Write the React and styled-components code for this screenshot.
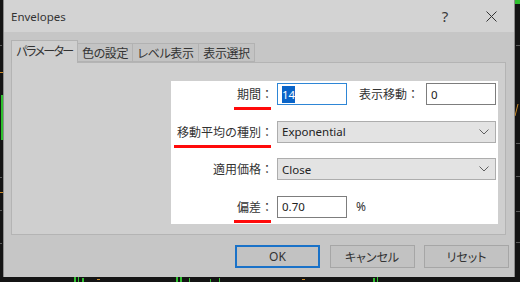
import styled, { createGlobalStyle } from 'styled-components';

const GlobalStyle = createGlobalStyle`
  html, body {
    margin: 0;
    padding: 0;
    background: #141414;
  }
  body {
    font-family: "Noto Sans", "Noto Sans CJK JP", sans-serif;
    color: #2b2b2b;
  }
`;

const Screen = styled.div`
  position: relative;
  width: 520px;
  height: 282px;
  box-sizing: border-box;
  padding: 0 6px 5px 3px;
  display: flex;
  background: #141414;
  overflow: hidden;
`;

const Chart = styled.svg`
  position: absolute;
  inset: 0;
  z-index: 0;
`;

const Dialog = styled.div`
  position: relative;
  z-index: 1;
  flex: 1;
  display: flex;
  flex-direction: column;
  background: #c6c6c6;
  border-left: 1px solid #8c8c8c;
  border-right: 1px solid #8c8c8c;
`;

const TitleBar = styled.div`
  height: 32px;
  display: flex;
  align-items: center;
  padding-left: 7px;
  background: #d3d3d3;
`;

const Title = styled.div`
  flex: 1;
  font-size: 11.5px;
  color: #333;
`;

const CaptionButton = styled.div`
  width: 46px;
  height: 32px;
  display: flex;
  align-items: center;
  justify-content: center;
  font-size: 15px;
  color: #3a3a3a;
`;

const Body = styled.div`
  flex: 1;
  display: flex;
  flex-direction: column;
  padding: 8px 8px 9px 7px;
`;

const TabStrip = styled.div`
  height: 22px;
  display: flex;
  align-items: flex-end;
  position: relative;
  z-index: 2;
`;

const Tab = styled.div`
  box-sizing: border-box;
  width: ${({ $w }) => $w}px;
  height: ${({ $active }) => ($active ? '23px' : '19px')};
  margin-bottom: ${({ $active }) => ($active ? '-1px' : '0')};
  margin-left: ${({ $active }) => ($active ? '0' : '-1px')};
  padding-bottom: ${({ $active }) => ($active ? '2px' : '0')};
  display: flex;
  align-items: center;
  justify-content: center;
  font-size: 12px;
  font-feature-settings: "palt";
  letter-spacing: ${({ $tight }) => ($tight ? '-1.6px' : '-0.4px')};
  color: #333;
  background: ${({ $active }) => ($active ? '#cfcfcf' : '#c3c3c3')};
  border: 1px solid #b2b2b2;
  border-bottom: ${({ $active }) => ($active ? 'none' : '1px solid #b2b2b2')};
`;

const Panel = styled.div`
  height: 173px;
  box-sizing: border-box;
  padding: 18px 7px 10px 159px;
  background: #cfcfcf;
  border: 1px solid #b4b4b4;
  display: flex;
`;

const Form = styled.div`
  flex: 1;
  background: #ffffff;
  padding: 2px 2px 0 0;
  display: flex;
  flex-direction: column;
  gap: 15.5px;
`;

const Row = styled.div`
  height: 22px;
  display: flex;
  align-items: center;
`;

const Label = styled.div`
  width: 102px;
  margin-right: 4px;
  text-align: right;
  font-size: 12px;
  color: #333;
  flex: none;
`;

const LabelText = styled.span`
  position: relative;
  display: inline-block;

  &::after {
    content: '';
    display: ${({ $mark }) => ($mark ? 'block' : 'none')};
    position: absolute;
    left: -3px;
    right: 2px;
    bottom: -7px;
    height: 3px;
    background: #ff0a0a;
  }
`;

const SubLabel = styled.div`
  flex: 1;
  text-align: right;
  padding-right: 7px;
  font-size: 12px;
  color: #333;
`;

const Field = styled.div`
  box-sizing: border-box;
  width: 70px;
  height: 22px;
  display: flex;
  align-items: center;
  padding-left: 4px;
  background: #fff;
  border: 1px solid ${({ $focused }) => ($focused ? '#2e86d6' : '#7d7d7d')};
  font-size: 11.5px;
  color: #222;
`;

const Selected = styled.span`
  background: #0a64c8;
  color: #fff;
  padding: 1px 0;
`;

const Select = styled.div`
  box-sizing: border-box;
  width: 219px;
  height: 22px;
  display: flex;
  align-items: center;
  justify-content: space-between;
  padding: 0 6px 0 4px;
  background: #e3e3e3;
  border: 1px solid #adadad;
  font-size: 11.5px;
  color: #222;
`;

const Unit = styled.span`
  margin-left: 9px;
  font-size: 12px;
  color: #333;
`;

const ButtonRow = styled.div`
  margin-top: 10px;
  margin-right: -3px;
  display: flex;
  justify-content: flex-end;
  gap: 9.5px;
`;

const Button = styled.div`
  box-sizing: border-box;
  width: 85px;
  height: 23px;
  display: flex;
  align-items: center;
  justify-content: center;
  background: #c2c2c2;
  border: ${({ $default }) => ($default ? '2px solid #1a72c8' : '1px solid #a6a6a6')};
  font-size: 12px;
  font-feature-settings: "palt";
  color: #333;
`;

const Chevron = () => (
  <svg width="10" height="6" viewBox="0 0 10 6">
    <polyline points="0.5,0.5 5,5 9.5,0.5" fill="none" stroke="#606060" strokeWidth="1" />
  </svg>
);

const CloseIcon = () => (
  <svg width="11" height="11" viewBox="0 0 11 11">
    <path d="M0.5 0.5 L10.5 10.5 M10.5 0.5 L0.5 10.5" stroke="#333" strokeWidth="1" />
  </svg>
);

const tabs = [
  { name: 'パラメーター', w: 67, tight: true },
  { name: '色の設定', w: 56 },
  { name: 'レベル表示', w: 67 },
  { name: '表示選択', w: 57 },
];

export default function App() {
  return (
    <>
      <GlobalStyle />
      <Screen>
        <Chart width="520" height="282" viewBox="0 0 520 282">
          <g fill="#2fbf2f">
            <rect x="1" y="95" width="2" height="45" />
            <rect x="505" y="0" width="15" height="4" />
            <rect x="74" y="277" width="2" height="5" />
            <rect x="78" y="277" width="1" height="5" />
            <rect x="82" y="278" width="2" height="4" />
            <rect x="176" y="277" width="2" height="5" />
            <rect x="180" y="277" width="2" height="5" />
            <rect x="189" y="278" width="1" height="4" />
            <rect x="210" y="279" width="1" height="3" />
            <rect x="219" y="278" width="1" height="4" />
            <rect x="373" y="278" width="2" height="4" />
            <rect x="377" y="277" width="1" height="5" />
          </g>
          <g fill="#c98a2a">
            <rect x="0" y="72" width="3" height="1" />
            <rect x="0" y="192" width="3" height="1" />
            <rect x="97" y="279" width="3" height="1" />
            <rect x="302" y="279" width="3" height="1" />
            <path d="M515 116 L518 104" stroke="#c98a2a" strokeWidth="1" />
          </g>
          <g fill="#5a5a5a">
            <rect x="516" y="45" width="4" height="1" />
            <rect x="516" y="143" width="4" height="1" />
            <rect x="516" y="176" width="4" height="1" />
            <rect x="516" y="211" width="4" height="1" />
            <rect x="516" y="242" width="4" height="1" />
            <rect x="0" y="45" width="2" height="1" />
            <rect x="0" y="177" width="2" height="1" />
            <rect x="0" y="210" width="2" height="1" />
            <rect x="0" y="243" width="2" height="1" />
          </g>
        </Chart>
        <Dialog>
          <TitleBar>
            <Title>Envelopes</Title>
            <CaptionButton>?</CaptionButton>
            <CaptionButton>
              <CloseIcon />
            </CaptionButton>
          </TitleBar>
          <Body>
            <TabStrip>
              {tabs.map((t, i) => (
                <Tab key={t.name} $active={i === 0} $w={t.w} $tight={t.tight}>
                  {t.name}
                </Tab>
              ))}
            </TabStrip>
            <Panel>
              <Form>
                <Row>
                  <Label>
                    <LabelText $mark>期間：</LabelText>
                  </Label>
                  <Field $focused>
                    <Selected>14</Selected>
                  </Field>
                  <SubLabel>表示移動：</SubLabel>
                  <Field>0</Field>
                </Row>
                <Row>
                  <Label>
                    <LabelText $mark>移動平均の種別：</LabelText>
                  </Label>
                  <Select>
                    Exponential
                    <Chevron />
                  </Select>
                </Row>
                <Row>
                  <Label>
                    <LabelText>適用価格：</LabelText>
                  </Label>
                  <Select>
                    Close
                    <Chevron />
                  </Select>
                </Row>
                <Row>
                  <Label>
                    <LabelText $mark>偏差：</LabelText>
                  </Label>
                  <Field>0.70</Field>
                  <Unit>%</Unit>
                </Row>
              </Form>
            </Panel>
            <ButtonRow>
              <Button $default>OK</Button>
              <Button>キャンセル</Button>
              <Button>リセット</Button>
            </ButtonRow>
          </Body>
        </Dialog>
      </Screen>
    </>
  );
}
